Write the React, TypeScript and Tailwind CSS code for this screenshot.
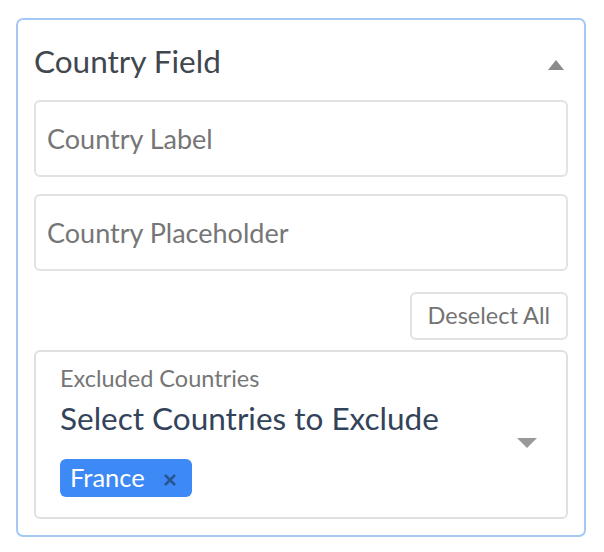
export default function App() {
  return (
    <div className="min-h-screen bg-white pl-4 pr-[18px] pt-[18px] font-['Lato',sans-serif]">
      <div className="rounded-[7px] border-2 border-[#a4c9f7] px-4 pb-4 pt-4">
        <header className="mb-3 flex h-[52px] items-center justify-between">
          <h2 className="text-[31.5px] leading-none text-[#41474e]">Country Field</h2>
          <svg width="16" height="10" viewBox="0 0 16 10" className="mr-[4px] mt-[6px]">
            <path d="M8 0 L16 10 L0 10 Z" fill="#8c8c8c" />
          </svg>
        </header>

        <div className="flex flex-col gap-[17px]">
          <Field placeholder="Country Label" />
          <Field placeholder="Country Placeholder" />
        </div>

        <div className="mt-[21px] flex justify-end">
          <button className="h-[48px] rounded-[6px] border-2 border-[#e2e2e2] px-[16px] text-[23.5px] leading-none text-[#737373]">
            Deselect All
          </button>
        </div>

        <div className="mt-[10px] flex rounded-[6px] border-2 border-[#e0e0e0] pb-[20px] pl-6 pr-[29px] pt-[10px]">
          <div className="flex-1">
            <div className="text-[23.5px] leading-[32px] text-[#767676]">Excluded Countries</div>
            <div className="mt-[6px] text-[31.5px] leading-[36px] text-[#33435a]">
              Select Countries to Exclude
            </div>
            <div className="mt-[23px] flex">
              <span className="inline-flex h-[38px] items-center rounded-[6px] bg-[#3d89f5] pl-[10px] pr-[15px] text-[25.5px] leading-none text-white">
                France
                <svg width="14" height="12" viewBox="0 0 14 12" className="ml-[18px] mt-[3px]">
                  <path d="M2 1 L12 11 M12 1 L2 11" stroke="#2a5592" strokeWidth="2.6" />
                </svg>
              </span>
            </div>
          </div>
          <svg width="20" height="10" viewBox="0 0 20 10" className="mt-[76px]">
            <path d="M0 0 L20 0 L10 10 Z" fill="#999999" />
          </svg>
        </div>
      </div>
    </div>
  )
}

function Field({ placeholder }: { placeholder: string }) {
  return (
    <input
      placeholder={placeholder}
      className="h-[77px] w-full rounded-[6px] border-2 border-[#e2e2e2] px-[11px] text-[27px] text-[#444] outline-none placeholder:text-[#767676]"
    />
  )
}
